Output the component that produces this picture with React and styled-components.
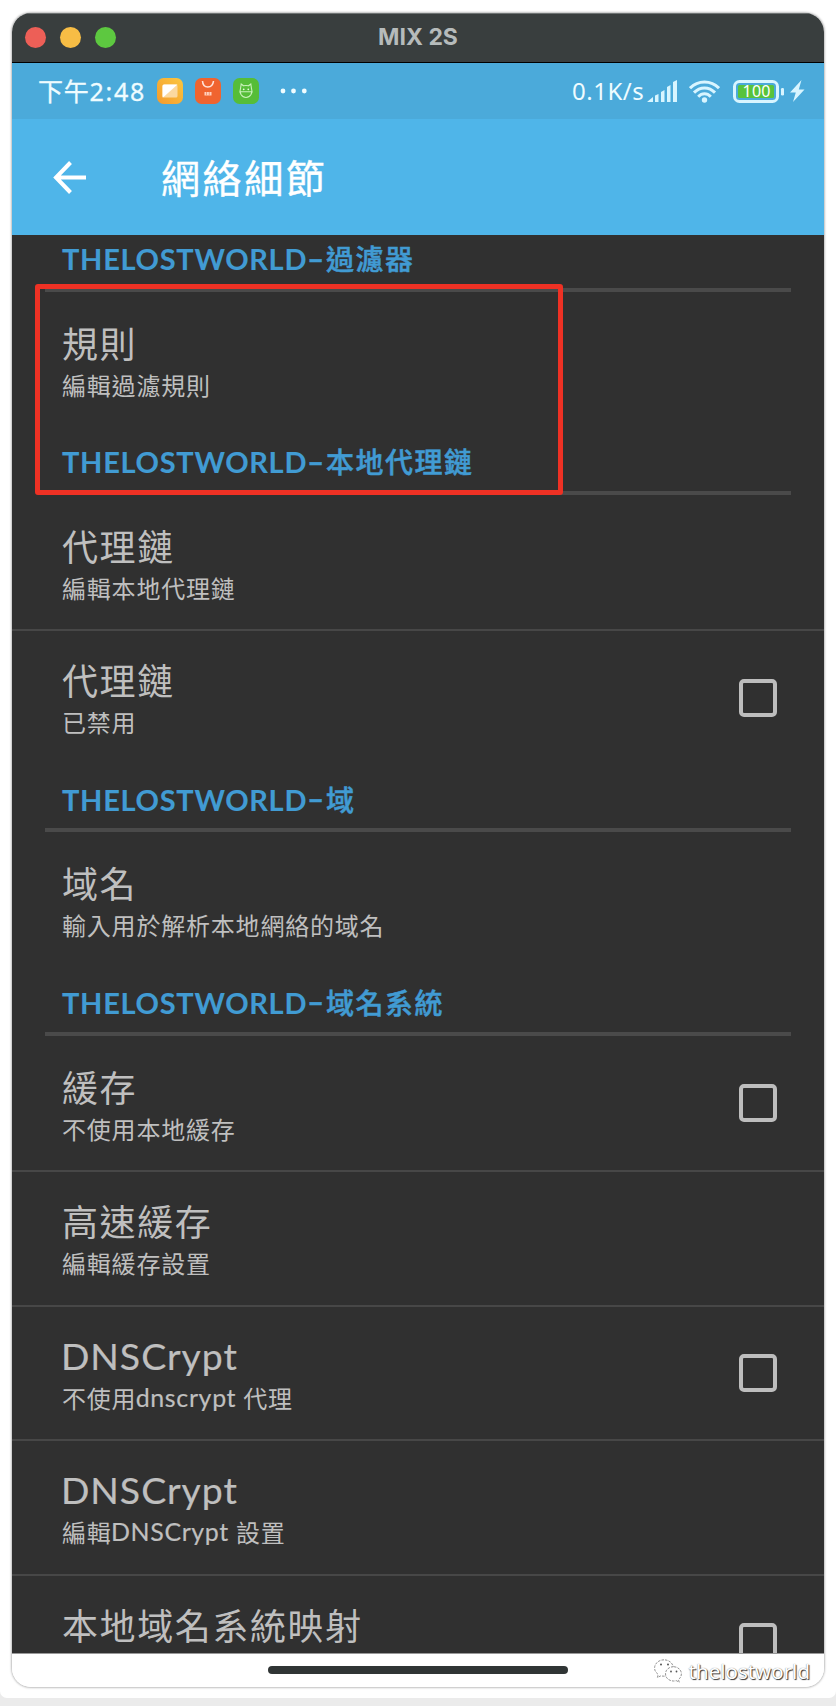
import React from "react";
import styled, { createGlobalStyle } from "styled-components";

const Global = createGlobalStyle`
  * { box-sizing: border-box; }
  html { background: #ebebeb; }
  body { margin: 0; font-family: Lato, "Noto Sans CJK TC", sans-serif; }
`;

const Page = styled.div`
  height: 1706px;
  overflow: hidden;
  background: #ebebeb;
`;

const Sheet = styled.div`
  height: 1698px;
  padding: 13px 12px 0;
  background: #fff;
  border-radius: 0 0 7px 7px;
`;

const Phone = styled.div`
  position: relative;
  display: flex;
  flex-direction: column;
  width: 812px;
  height: 1674px;
  overflow: hidden;
  background: #fff;
  border-radius: 19px;
`;

const Shadow = styled.div`
  width: 812px;
  border-radius: 19px;
  box-shadow: 0 0 2px 1px rgba(0, 0, 0, 0.25);
`;

const TitleBar = styled.header`
  position: relative;
  display: flex;
  align-items: center;
  justify-content: center;
  flex: none;
  height: 50px;
  background: #393e3e;
  border-top: 1px solid #6f7474;
  border-bottom: 1px solid #000;
  color: #b6bbbb;
  font: 700 23px/46px Inter, sans-serif;
  padding-bottom: 2px;
`;

const Lights = styled.div`
  position: absolute;
  left: 13px;
  top: 13px;
  display: flex;
  gap: 14px;
`;

const Light = styled.i`
  width: 21px;
  height: 21px;
  border-radius: 50%;
  background: ${(p) => p.$color};
`;

const StatusBar = styled.div`
  display: flex;
  align-items: center;
  justify-content: space-between;
  flex: none;
  height: 56px;
  padding: 0 19px 0 26px;
  background: #4baada;
  color: #effcff;
`;

const Group = styled.div`
  display: flex;
  align-items: center;
`;

const Clock = styled.span`
  width: 119px;
  font-size: 25px;
  line-height: 56px;
  letter-spacing: 0.8px;
  white-space: nowrap;
  -webkit-text-stroke: 0.3px #effcff;
`;

const Digits = styled.span`
  font: 25px "Noto Sans", sans-serif;
  letter-spacing: 1.7px;
`;

const Speed = styled.span`
  width: 75px;
  font: 24px/56px "Noto Sans", sans-serif;
  letter-spacing: 0.5px;
  white-space: nowrap;
`;

const Glyph = styled.svg`
  display: block;
  flex: none;
  margin-right: ${(p) => p.$gap || 0}px;
`;

const AppBar = styled.div`
  display: flex;
  align-items: center;
  flex: none;
  height: 116px;
  padding-left: 41px;
  background: #4fb5e9;
  color: #fff;
`;

const AppTitle = styled.h1`
  margin: 2px 0 0 75px;
  font-size: 39px;
  font-weight: 400;
  line-height: 60px;
  letter-spacing: 2.6px;
  -webkit-text-stroke: 0.4px #fff;
`;

const List = styled.main`
  flex: none;
  height: 1418px;
  overflow: hidden;
  background: #303030;
`;

const SectionTitle = styled.h2`
  height: 68.6px;
  margin: ${(p) => (p.$first ? "-12px" : "0")} 33px 0;
  padding: 16px 0 0 17px;
  border-bottom: 4px solid #4a4a4a;
  color: #419bd3;
  font-size: 28px;
  font-weight: 500;
  line-height: 40px;
  letter-spacing: 1.5px;
  white-space: nowrap;
  -webkit-text-stroke: 0.5px #419bd3;
`;

const Brand = styled.span`
  font-size: 29px;
  font-weight: 700;
  letter-spacing: 0.7px;
  -webkit-text-stroke: 0.1px #419bd3;
`;

const Dash = styled.span`
  margin-right: 2px;
  vertical-align: 1.5px;
  font-size: 29px;
  font-weight: 900;
  line-height: 1;
  letter-spacing: 0;
`;

const Item = styled.div`
  display: flex;
  align-items: center;
  justify-content: space-between;
  height: 134.55px;
  padding: 0 47px 0 50px;
  border-top: ${(p) => (p.$divided ? "2px solid #474747" : "0")};
  color: #bfbfbf;
`;

const Labels = styled.div`
  height: 134px;
  padding-top: ${(p) => (p.$divided ? "28px" : "30px")};
  align-self: flex-start;
`;

const Name = styled.div`
  font-size: 36px;
  line-height: 44px;
  letter-spacing: 1.6px;
  white-space: nowrap;
`;

const Note = styled.div`
  margin-top: 4px;
  font-size: 24px;
  line-height: 32px;
  letter-spacing: 0.8px;
  white-space: nowrap;
`;

const Latin = styled.span`
  margin-left: -0.03em;
  vertical-align: 1px;
  font-size: 1.04em;
  line-height: 1;
  letter-spacing: 0.026em;
  -webkit-text-stroke: 0.2px #bfbfbf;
`;

const Check = styled.span`
  width: 38px;
  height: 38px;
  border: 4.5px solid #bdbdbd;
  border-radius: 5px;
`;

const NavArea = styled.footer`
  display: flex;
  justify-content: center;
  flex: 1;
  padding-top: 12px;
  border-top: 1px solid #999;
`;

const Pill = styled.div`
  width: 300px;
  height: 8px;
  border-radius: 4px;
  background: #303535;
`;

const Highlight = styled.div`
  position: absolute;
  left: 23px;
  top: 271px;
  width: 528px;
  height: 211px;
  border: 5px solid #ee3124;
  border-radius: 3px;
`;

const Watermark = styled.div`
  position: absolute;
  right: 14px;
  bottom: 1px;
  display: flex;
  align-items: center;
  gap: 7px;
  color: #fff;
  font: 20.5px/30px "Noto Sans", sans-serif;
  text-shadow: 1px 1px 1px #333, 0 0 1px #777;
`;

const sections = [
  { title: "過濾器", items: [{ name: "規則", note: "編輯過濾規則" }] },
  {
    title: "本地代理鏈",
    items: [
      { name: "代理鏈", note: "編輯本地代理鏈" },
      { name: "代理鏈", note: "已禁用", check: true },
    ],
  },
  { title: "域", items: [{ name: "域名", note: "輸入用於解析本地網絡的域名" }] },
  {
    title: "域名系統",
    items: [
      { name: "緩存", note: "不使用本地緩存", check: true },
      { name: "高速緩存", note: "編輯緩存設置" },
      { name: "DNSCrypt", note: "不使用dnscrypt 代理", check: true },
      { name: "DNSCrypt", note: "編輯DNSCrypt 設置" },
      { name: "本地域名系統映射", note: "", check: true },
    ],
  },
];

const mixed = (text) =>
  text
    .split(/([A-Za-z]+)/)
    .filter(Boolean)
    .map((part, i) => (/[A-Za-z]/.test(part) ? <Latin key={i}>{part}</Latin> : part));

const NoteIcon = () => (
  <Glyph $gap={12} width="26" height="26" viewBox="0 0 26 26">
    <defs>
      <linearGradient id="amber" x1="0" y1="1" x2="1" y2="0">
        <stop stopColor="#f39a2d" />
        <stop offset="1" stopColor="#fbc740" />
      </linearGradient>
    </defs>
    <rect width="26" height="26" rx="6.5" fill="url(#amber)" />
    <rect x="5.5" y="6.5" width="15" height="13" rx="1.5" fill="#fbd9a0" />
    <path d="M7 6.5H20.500L6 19.500Q5.500 19.500 5.500 18V8Q5.500 6.500 7 6.500Z" fill="#fff" />
  </Glyph>
);

const ShopIcon = () => (
  <Glyph $gap={12} width="26" height="26" viewBox="0 0 26 26">
    <rect width="26" height="26" rx="6.5" fill="#f0642f" />
    <path d="M7.500 3C8 11 17.500 11 18.500 3" fill="none" stroke="#ffe3d8" strokeWidth="1.600" />
    <rect x="9.500" y="14" width="7" height="3.500" fill="#ffd0bd" />
    <path d="M11.500 14v3.500M14.300 14v3.500" stroke="#f58a62" strokeWidth=".8" />
  </Glyph>
);

const CatIcon = () => (
  <Glyph $gap={21} width="26" height="26" viewBox="0 0 26 26">
    <rect width="26" height="26" rx="6.5" fill="#56bd38" />
    <g fill="none" stroke="#c9f2ba" strokeWidth="1.100">
      <path d="M7.500 10.500L8.200 6L10.500 7.800Q13 7.200 15.500 7.800L17.800 6L18.500 10.500Q19.800 13.500 18 16.500Q16 19.500 13 19.500T8 16.500Q6.200 13.500 7.500 10.500Z" />
      <path d="M7 13.800H19" />
    </g>
    <circle cx="10.700" cy="11.300" r=".9" fill="#e4fadb" />
    <circle cx="15.300" cy="11.300" r=".9" fill="#e4fadb" />
  </Glyph>
);

const Status = () => (
  <StatusBar>
    <Group>
      <Clock>
        下午<Digits>2:48</Digits>
      </Clock>
      <NoteIcon />
      <ShopIcon />
      <CatIcon />
      <Glyph width="28" height="6" viewBox="0 0 28 6">
        <g fill="#effcff">
          <circle cx="3" cy="3" r="2.400" />
          <circle cx="13.500" cy="3" r="2.400" />
          <circle cx="24.300" cy="3" r="2.400" />
        </g>
      </Glyph>
    </Group>
    <Group>
      <Speed>0.1K/s</Speed>
      <Glyph $gap={12} width="30" height="22" viewBox="0 0 30 22" fill="#d8f5ff">
        <path d="M0 22L6 17V22ZM8 15.500L11.500 14V22H8ZM14 12L17.500 10V22H14ZM20 7L23.500 5V22H20ZM26 2L30 0V22H26Z" />
      </Glyph>
      <Glyph $gap={13} width="31" height="23" viewBox="0 0 31 23">
        <g fill="none" stroke="#d8f5ff" strokeWidth="3">
          <path d="M1 8.200C9 0 22 0 30 8.200" />
          <path d="M5 12.600C11 6.300 20 6.300 26 12.600" />
          <path d="M9.200 16.700C13 12.800 18 12.800 21.800 16.700" />
        </g>
        <circle cx="15.500" cy="20" r="2.700" fill="#d8f5ff" />
      </Glyph>
      <Glyph $gap={6} width="51" height="23" viewBox="0 0 51 23">
        <rect x="1.500" y="1.500" width="43" height="20" rx="5" fill="none" stroke="#d8f5ff" strokeWidth="3" />
        <rect x="5" y="5" width="36" height="13" rx="1.500" fill="#58c33b" />
        <text x="23.500" y="17.300" textAnchor="middle" fill="#fff" fontFamily="Noto Sans" fontSize="16" textLength="28">
          100
        </text>
        <rect x="48" y="8" width="3" height="7.500" rx="1.300" fill="#d8f5ff" />
      </Glyph>
      <Glyph width="15" height="22" viewBox="0 0 15 22">
        <path d="M11.500 0L0 12.500H5.800L3 22L14.500 9.500H8.800Z" fill="#d8f5ff" />
      </Glyph>
    </Group>
  </StatusBar>
);

const ChatLogo = () => (
  <Glyph width="28" height="24" viewBox="0 0 28 24" fill="#fff" stroke="#777" strokeWidth=".8" strokeDasharray="2.500 1.200">
    <path d="M10 .8C4.700.8.600 4.500.600 9c0 2.600 1.400 4.900 3.600 6.400L3.400 18.500l3.500-1.700c1 .3 2 .4 3.100.4 5.300 0 9.300-3.700 9.300-8.200S15.300.8 10 .8Z" />
    <path d="M19.500 7.700c-4.500 0-8 3.200-8 7.200s3.500 7.100 8 7.100c.9 0 1.800-.1 2.700-.4l3 1.600-.8-2.700c1.900-1.300 3-3.400 3-5.600 0-4-3.500-7.200-7.900-7.200Z" />
    <g fill="#555" stroke="none">
      <circle cx="7" cy="5.500" r="1" />
      <circle cx="14" cy="5.500" r="1" />
      <circle cx="17" cy="12.500" r=".9" />
      <circle cx="22.500" cy="12.500" r=".9" />
    </g>
  </Glyph>
);

export default function App() {
  return (
    <Page>
      <Global />
      <Sheet>
        <Shadow>
          <Phone>
            <TitleBar>
              <Lights>
                <Light $color="#ed5f57" />
                <Light $color="#f7bd45" />
                <Light $color="#5dc840" />
              </Lights>
              MIX 2S
            </TitleBar>
            <Status />
            <AppBar>
              <Glyph width="33" height="33" viewBox="0 0 33 33" fill="none" stroke="#fff" strokeWidth="4">
                <path d="M17.500 1.500L3 16.500L17.500 31.500M3 16.500H33" />
              </Glyph>
              <AppTitle>網絡細節</AppTitle>
            </AppBar>
            <List>
              {sections.map((s, si) => (
                <React.Fragment key={s.title}>
                  <SectionTitle $first={si === 0}>
                    <Brand>THELOSTWORLD</Brand>
                    <Dash>–</Dash>
                    {s.title}
                  </SectionTitle>
                  {s.items.map((it, i) => (
                    <Item key={i} $divided={i > 0}>
                      <Labels $divided={i > 0}>
                        <Name>{mixed(it.name)}</Name>
                        <Note>{mixed(it.note)}</Note>
                      </Labels>
                      {it.check && <Check />}
                    </Item>
                  ))}
                </React.Fragment>
              ))}
            </List>
            <NavArea>
              <Pill />
            </NavArea>
            <Highlight />
            <Watermark>
              <ChatLogo />
              thelostworld
            </Watermark>
          </Phone>
        </Shadow>
      </Sheet>
    </Page>
  );
}
